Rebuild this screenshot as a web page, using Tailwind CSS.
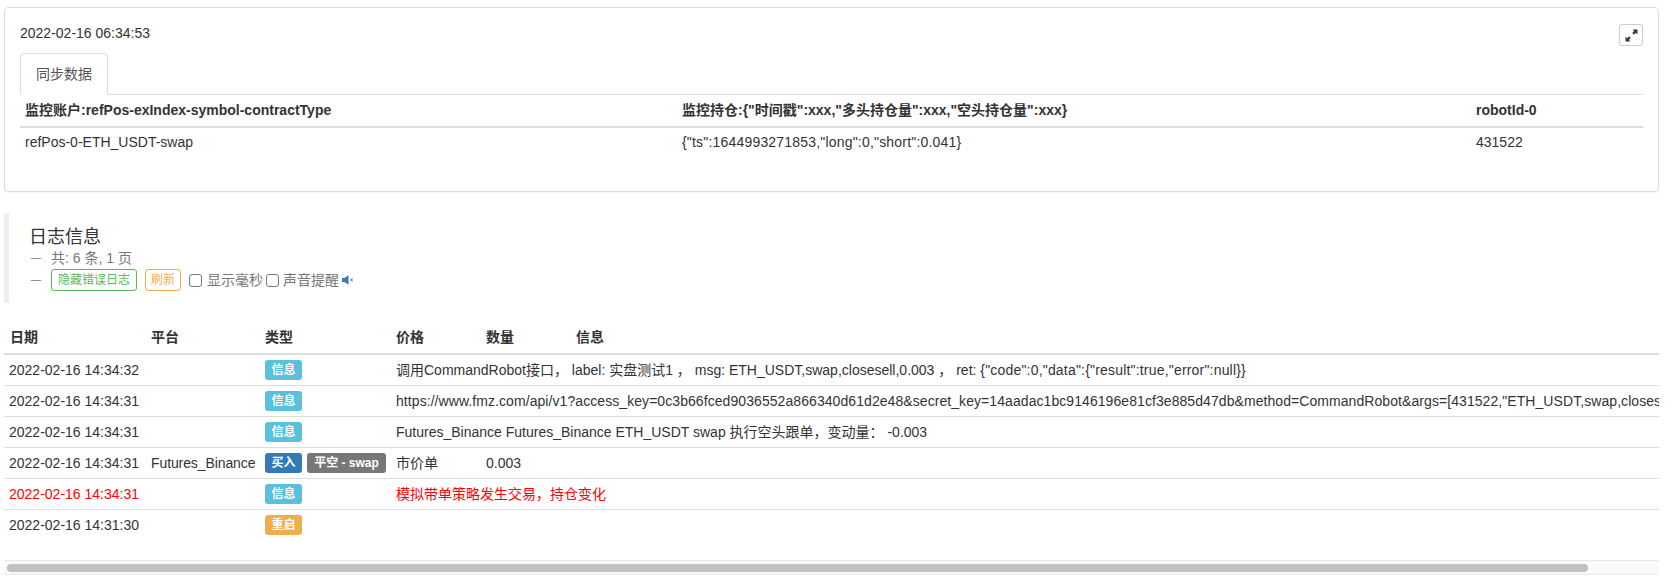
<!DOCTYPE html>
<html lang="en">
<head>
    <meta charset="UTF-8">
    <title>日志信息</title>
    <script src="https://cdn.jsdelivr.net/npm/@tailwindcss/browser@4"></script>
</head>
<body class="bg-white text-[#333] text-[14px] leading-[20px] font-['Liberation_Sans','Noto_Sans_CJK_SC',sans-serif] h-[580px] overflow-hidden">
    <!-- Status panel -->
    <section class="relative mx-[4px] w-[1655px] mt-[7px] h-[185px] border border-[#ddd] rounded-[4px] shadow-[0_1px_1px_rgba(0,0,0,0.05)] px-[15px] pt-[15px]">
        <button class="absolute top-[16px] right-[15px] w-[24px] h-[22px] border border-[#ccc] rounded-[3px] flex items-center justify-center">
            <svg width="13" height="13" viewBox="0 0 12 12" fill="#333">
                <path d="M7 0.5h4.5V5L10 3.5 8.2 5.3 6.7 3.8 8.5 2zM5 11.5H0.5V7L2 8.5l1.8-1.8 1.5 1.5L3.5 10z"/>
            </svg>
        </button>
        <div class="h-[20px]">2022-02-16 06:34:53</div>
        <div class="mt-[10px] h-[42px] border-b border-[#ddd] flex">
            <div class="w-[88px] h-[42px] bg-white border border-[#ddd] border-b-white rounded-t-[4px] flex items-center justify-center text-[#555]">同步数据</div>
        </div>
        <table class="table-fixed w-[1623px] border-collapse">
            <colgroup>
                <col class="w-[657px]"><col class="w-[794px]"><col>
            </colgroup>
            <thead>
                <tr class="h-[32px] border-b-2 border-[#ddd] text-left">
                    <th class="px-[5px] pb-[2px] font-bold">监控账户:refPos-exIndex-symbol-contractType</th>
                    <th class="px-[5px] pb-[2px] font-bold">监控持仓:{"时间戳":xxx,"多头持仓量":xxx,"空头持仓量":xxx}</th>
                    <th class="px-[5px] pb-[2px] font-bold">robotId-0</th>
                </tr>
            </thead>
            <tbody>
                <tr class="h-[29px]">
                    <td class="px-[5px]">refPos-0-ETH_USDT-swap</td>
                    <td class="px-[5px] tracking-[0.19px]">{"ts":1644993271853,"long":0,"short":0.041}</td>
                    <td class="px-[5px]">431522</td>
                </tr>
            </tbody>
        </table>
    </section>

    <!-- Log heading -->
    <section class="ml-[4px] mt-[21px] h-[90px] border-l-[5px] border-[#eee] pl-[20px] pt-[14px]">
        <h2 class="text-[18px] leading-[20px]">日志信息</h2>
        <div class="mt-[1px] pl-[2px] flex items-center h-[20px] text-[#777]">
            <span class="w-[20px] text-[10px]">—</span>
            <span>共: 6 条, 1 页</span>
        </div>
        <div class="pl-[2px] flex items-center h-[24px] text-[#777]">
            <span class="w-[20px] text-[10px]">—</span>
            <span class="w-[86px] h-[22px] border border-[#5cb85c] rounded-[3px] text-[#5cb85c] text-[12px] flex items-center justify-center">隐藏错误日志</span>
            <span class="ml-[8px] w-[36px] h-[22px] border border-[#f0ad4e] rounded-[3px] text-[#f0ad4e] text-[12px] flex items-center justify-center">刷新</span>
            <span class="ml-[8px] w-[13px] h-[13px] border border-[#767676] rounded-[3px] bg-white"></span>
            <span class="ml-[5px]">显示毫秒</span>
            <span class="ml-[3px] w-[13px] h-[13px] border border-[#767676] rounded-[3px] bg-white"></span>
            <span class="ml-[4px]">声音提醒</span>
            <svg class="ml-[3px]" width="12" height="10" viewBox="0 0 12 10">
                <path d="M0 3h2.5L6.5 0.3v9.4L2.5 7H0z" fill="#337ab7"/>
                <path d="M8.2 3.6l2.6 2.6M10.8 3.6L8.2 6.2" stroke="#337ab7" stroke-width="1" fill="none"/>
            </svg>
        </div>
    </section>

    <!-- Log table -->
    <section class="ml-[4px] w-[1655px] overflow-hidden mt-[24px]">
        <table class="table-fixed border-collapse w-[2400px] whitespace-nowrap text-left">
            <colgroup>
                <col class="w-[142px]"><col class="w-[114px]"><col class="w-[131px]"><col class="w-[90px]"><col class="w-[90px]"><col>
            </colgroup>
            <thead>
                <tr class="h-[27px] border-b-2 border-[#ddd]">
                    <th class="pl-[6px] pb-[6px] font-bold">日期</th>
                    <th class="pl-[5px] pb-[6px] font-bold">平台</th>
                    <th class="pl-[5px] pb-[6px] font-bold">类型</th>
                    <th class="pl-[5px] pb-[6px] font-bold">价格</th>
                    <th class="pl-[5px] pb-[6px] font-bold">数量</th>
                    <th class="pl-[5px] pb-[6px] font-bold">信息</th>
                </tr>
            </thead>
            <tbody>
                <tr class="h-[31px] border-b border-[#ddd]">
                    <td class="pl-[5px]">2022-02-16 14:34:32</td>
                    <td class="pl-[5px]"></td>
                    <td class="pl-[5px]"><span class="inline-flex items-center justify-center w-[37px] h-[20px] rounded-[3px] bg-[#5bc0de] text-white text-[12px] font-bold align-middle">信息</span></td>
                    <td class="pl-[5px]" colspan="3">调用CommandRobot接口， label: 实盘测试1 ， msg: ETH_USDT,swap,closesell,0.003 ， ret: <span class="tracking-[0.19px]">{"code":0,"data":{"result":true,"error":null}}</span></td>
                </tr>
                <tr class="h-[31px] border-b border-[#ddd]">
                    <td class="pl-[5px]">2022-02-16 14:34:31</td>
                    <td class="pl-[5px]"></td>
                    <td class="pl-[5px]"><span class="inline-flex items-center justify-center w-[37px] h-[20px] rounded-[3px] bg-[#5bc0de] text-white text-[12px] font-bold align-middle">信息</span></td>
                    <td class="pl-[5px] tracking-[0.07px]" colspan="3">https://www.fmz.com/api/v1?access_key=0c3b66fced9036552a866340d61d2e48&amp;secret_key=14aadac1bc9146196e81cf3e885d47db&amp;method=CommandRobot&amp;args=[431522,"ETH_USDT,swap,closesell,0.003"]</td>
                </tr>
                <tr class="h-[31px] border-b border-[#ddd]">
                    <td class="pl-[5px]">2022-02-16 14:34:31</td>
                    <td class="pl-[5px]"></td>
                    <td class="pl-[5px]"><span class="inline-flex items-center justify-center w-[37px] h-[20px] rounded-[3px] bg-[#5bc0de] text-white text-[12px] font-bold align-middle">信息</span></td>
                    <td class="pl-[5px]" colspan="3">Futures_Binance Futures_Binance ETH_USDT swap 执行空头跟单，变动量： -0.003</td>
                </tr>
                <tr class="h-[31px] border-b border-[#ddd]">
                    <td class="pl-[5px]">2022-02-16 14:34:31</td>
                    <td class="pl-[5px] tracking-[-0.1px]">Futures_Binance</td>
                    <td class="pl-[5px]">
                        <div class="flex gap-[5px]">
                            <span class="inline-flex items-center justify-center w-[37px] h-[20px] rounded-[3px] bg-[#337ab7] text-white text-[12px] font-bold">买入</span>
                            <span class="inline-flex items-center justify-center w-[79px] h-[20px] rounded-[3px] bg-[#777] text-white text-[12px] font-bold">平空 - swap</span>
                        </div>
                    </td>
                    <td class="pl-[5px]">市价单</td>
                    <td class="pl-[5px]">0.003</td>
                    <td></td>
                </tr>
                <tr class="h-[31px] border-b border-[#ddd] text-[#f00]">
                    <td class="pl-[5px]">2022-02-16 14:34:31</td>
                    <td class="pl-[5px]"></td>
                    <td class="pl-[5px]"><span class="inline-flex items-center justify-center w-[37px] h-[20px] rounded-[3px] bg-[#5bc0de] text-white text-[12px] font-bold align-middle">信息</span></td>
                    <td class="pl-[5px]" colspan="3">模拟带单策略发生交易，持仓变化</td>
                </tr>
                <tr class="h-[31px]">
                    <td class="pl-[5px]">2022-02-16 14:31:30</td>
                    <td class="pl-[5px]"></td>
                    <td class="pl-[5px]"><span class="inline-flex items-center justify-center w-[37px] h-[20px] rounded-[3px] bg-[#f0ad4e] text-white text-[12px] font-bold align-middle">重启</span></td>
                    <td colspan="3"></td>
                </tr>
            </tbody>
        </table>
        <!-- Scrollbar -->
        <div class="mt-[20px] h-[15px] bg-[#fafafa] border-y border-[#e8e8e8] pl-[3px] pt-[3px]">
            <div class="w-[1581px] h-[8px] rounded-full bg-[#c1c1c1]"></div>
        </div>
    </section>
</body>
</html>
